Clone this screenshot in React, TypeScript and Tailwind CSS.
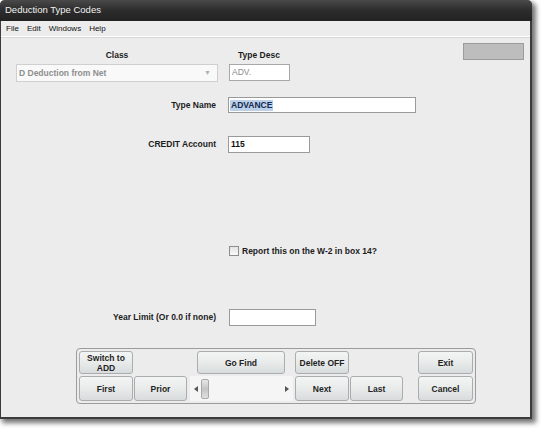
import React from 'react';

// Swing-style "Deduction Type Codes" maintenance window.

const label = "text-[8.5px] font-bold text-[#1c1c1c] leading-none";

const Btn: React.FC<{ w: string; className?: string; children: React.ReactNode }> = ({ w, className = '', children }) => (
  <button
    className={`${w} ${className} h-full flex items-center justify-center text-center rounded-[3px] border border-[#a9adb0] bg-gradient-to-b from-[#f3f5f5] via-[#e9ebeb] to-[#d9dcdc] text-[8.5px] font-bold leading-[10px] text-[#1f1f1f]`}
  >
    {children}
  </button>
);

const FieldRow: React.FC<{ text: string; className: string; children: React.ReactNode }> = ({ text, className, children }) => (
  <div className={`flex items-center ${className}`}>
    <div className={`w-[215px] text-right ${label}`}>{text}</div>
    <div className="ml-[12px] h-full">{children}</div>
  </div>
);

const App: React.FC = () => {
  return (
    <div className="w-[541px] h-[429px] bg-white font-['Liberation_Sans',Arial,sans-serif]">
      <div className="w-[532px] h-[419px] flex flex-col rounded-t-[5px] border-l border-r-2 border-b-2 border-[#3c3c3c] bg-[#ececec] shadow-[3px_3px_5px_1px_rgba(0,0,0,0.55)]">
        {/* title bar */}
        <div className="h-[21px] -mx-px -mr-[2px] flex items-center pl-[5px] rounded-t-[5px] bg-gradient-to-b from-[#4a4a4a] via-[#2c2c2c] to-[#222222] text-[9.5px] text-[#f2f2f2]">
          Deduction Type Codes
        </div>

        {/* menu */}
        <div className="h-[16px] flex items-center gap-[8px] pl-[5px] text-[8px] text-[#111] border-b border-white shadow-[0_1px_0_#d8d8d8]">
          <span>File</span>
          <span>Edit</span>
          <span>Windows</span>
          <span>Help</span>
        </div>

        <div className="flex-1 flex flex-col">
          {/* class / type desc */}
          <div className="mt-[6px] flex items-start">
            <div className="ml-[15px] w-[202px]">
              <div className={`mt-[8px] h-[13px] text-center ${label}`}>Class</div>
              <div className="h-[18px] flex items-center justify-between pl-[2px] pr-[6px] bg-[#f9f9f9] border border-[#cfcfcf] text-[8.5px] font-bold text-[#8e8e8e]">
                <span>D Deduction from Net</span>
                <span className="text-[7px] text-[#b0b0b0]">▼</span>
              </div>
            </div>
            <div className="ml-[11px]">
              <div className={`mt-[8px] h-[13px] pl-[9px] ${label}`}>Type Desc</div>
              <div className="w-[61px] h-[17px] flex items-center pl-[2px] bg-white border border-[#a8a8a8] text-[8.5px] text-[#8a8a8a]">
                ADV.
              </div>
            </div>
            <div className="ml-auto mr-[6px] w-[61px] h-[17px] bg-[#bdbdbd] border border-[#9c9c9c]" />
          </div>

          <FieldRow text="Type Name" className="mt-[15px] h-[16px]">
            <div className="w-[188px] h-full flex items-center pl-[1px] bg-white border border-[#9a9a9a]">
              <span className="bg-[#bcd0e8] px-[1px] text-[8.5px] font-bold text-[#122a52] leading-[11px]">ADVANCE</span>
            </div>
          </FieldRow>

          <FieldRow text="CREDIT Account" className="mt-[23px] h-[17px]">
            <div className="w-[82px] h-full flex items-center pl-[2px] bg-white border border-[#9a9a9a] text-[8.5px] font-bold text-[#111]">
              115
            </div>
          </FieldRow>

          <div className="mt-[93px] ml-[228px] h-[10px] flex items-center">
            <div className="w-[10px] h-[10px] border border-[#8e8e8e] bg-gradient-to-b from-[#e4e4e4] to-[#fafafa]" />
            <span className={`ml-[3px] ${label}`}>Report this on the W-2 in box 14?</span>
          </div>

          <FieldRow text="Year Limit (Or 0.0 if none)" className="mt-[53px] h-[17px]">
            <div className="ml-px w-[87px] h-full bg-white border border-[#9a9a9a]" />
          </FieldRow>

          {/* navigation panel */}
          <div className="mt-[22px] ml-[75px] w-[400px] h-[56px] rounded-[4px] border border-[#9c9c9c] pt-[2px] pl-[2px] flex flex-col gap-[2px]">
            <div className="h-[23px] flex">
              <Btn w="w-[54px]">Switch to<br />ADD</Btn>
              <Btn w="w-[88px]" className="ml-[64px]">Go Find</Btn>
              <Btn w="w-[54px]" className="ml-[10px]">Delete OFF</Btn>
              <Btn w="w-[55px]" className="ml-[69px]">Exit</Btn>
            </div>
            <div className="h-[25px] flex">
              <Btn w="w-[54px]">First</Btn>
              <Btn w="w-[53px]" className="ml-px">Prior</Btn>
              <div className="ml-[3px] w-[103px] h-full flex items-center bg-[#f5f5f5] px-[4px]">
                <svg width="4" height="6" viewBox="0 0 4 6"><path d="M4 0 L0 3 L4 6 Z" fill="#555" /></svg>
                <div className="ml-[3px] w-[8px] h-[20px] rounded-[2px] border border-[#a8a8a8] bg-gradient-to-b from-[#e8e8e8] via-[#c4c4c4] to-[#e0e0e0]" />
                <div className="flex-1" />
                <svg width="4" height="6" viewBox="0 0 4 6"><path d="M0 0 L4 3 L0 6 Z" fill="#555" /></svg>
              </div>
              <Btn w="w-[54px]" className="ml-[2px]">Next</Btn>
              <Btn w="w-[53px]" className="ml-px">Last</Btn>
              <Btn w="w-[55px]" className="ml-[15px]">Cancel</Btn>
            </div>
          </div>
        </div>
      </div>
    </div>
  );
};

export default App;
